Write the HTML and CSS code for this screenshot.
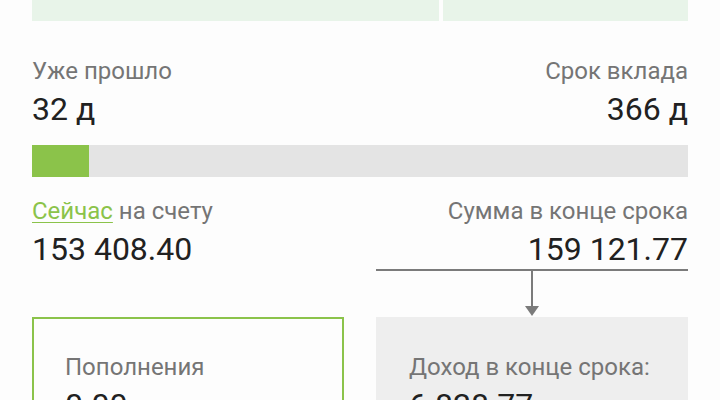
FILE: index.html
```html
<!DOCTYPE html>
<html lang="ru">
<head>
<meta charset="utf-8">
<link rel="stylesheet" href="styles.css">
</head>
<body>
<div class="page">
  <div class="tabs">
    <div class="tab tab-wide"></div>
    <div class="tab tab-narrow"></div>
  </div>

  <div class="pair days">
    <div class="col">
      <div class="label">Уже прошло</div>
      <div class="value">32 д</div>
    </div>
    <div class="col right">
      <div class="label">Срок вклада</div>
      <div class="value">366 д</div>
    </div>
  </div>

  <div class="bar"><div class="fill" style="width:8.74%"></div></div>

  <div class="pair sums">
    <div class="col">
      <div class="label"><span class="now">Сейчас</span> на счету</div>
      <div class="value">153 408.40</div>
    </div>
    <div class="col right">
      <div class="label">Сумма в конце срока</div>
      <div class="value">159 121.77</div>
      <div class="connector">
        <div class="stem"></div>
        <svg class="head" width="14" height="10" viewBox="0 0 14 10"><polygon points="0,0 14,0 7,10" fill="#7b7b7b"/></svg>
      </div>
    </div>
  </div>

  <div class="cards">
    <div class="card card-green">
      <div class="label">Пополнения</div>
      <div class="value">0.00</div>
    </div>
    <div class="card card-gray">
      <div class="label">Доход в конце срока:</div>
      <div class="value">6 828.77</div>
    </div>
  </div>
</div>
</body>
</html>
```

FILE: styles.css
```css
html, body {
  margin: 0;
  padding: 0;
  background: #fdfdfd;
  font-family: Roboto, "Noto Sans", sans-serif;
  overflow: hidden;
}
.page {
  padding: 0 32px;
  width: 656px;
}
.tabs {
  display: flex;
  gap: 4px;
  height: 21px;
}
.tab {
  background: #e8f4e9;
}
.tab-wide { width: 407px; }
.tab-narrow { width: 245px; }

.pair {
  display: flex;
  justify-content: space-between;
}
.col { display: flex; flex-direction: column; }
.right { align-items: flex-end; text-align: right; }

.label {
  font-size: 24px;
  line-height: 28px;
  color: #757575;
  white-space: nowrap;
}
.value {
  font-size: 32px;
  line-height: 36px;
  color: #212121;
  white-space: nowrap;
}
.days { margin-top: 36px; }
.pair .value { margin-top: 6px; }

.bar {
  margin-top: 18px;
  height: 32px;
  background: #e4e4e4;
}
.fill {
  height: 100%;
  background: #8bc34a;
}

.sums { margin-top: 20px; }
.now {
  color: #8bc34a;
  text-decoration: underline;
  text-decoration-thickness: 1px;
  text-underline-offset: 3px;
}
.sums .right { width: 312px; }
.connector {
  width: 312px;
  border-top: 2px solid #7b7b7b;
  margin-top: 2px;
  display: flex;
  flex-direction: column;
  align-items: center;
  height: 46px;
}
.stem {
  width: 2px;
  height: 36px;
  background: #7b7b7b;
}
.head { display: block; margin-top: -1px; }

.cards {
  display: flex;
  justify-content: space-between;
}
.card {
  width: 312px;
  height: 120px;
  box-sizing: border-box;
}
.card-green {
  border: 2px solid #8bc34a;
  padding: 34px 31px 0;
}
.card-gray {
  background: #eeeeee;
  padding: 36px 33px 0;
}
.card .value { margin-top: 6px; }
```
